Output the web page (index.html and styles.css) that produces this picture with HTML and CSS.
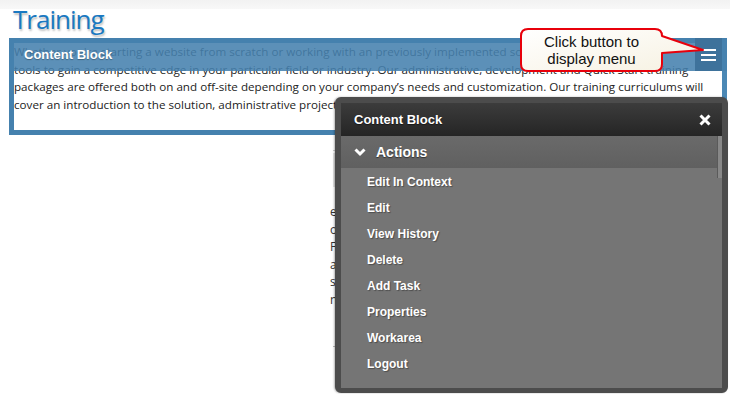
FILE: index.html
```html
<!DOCTYPE html>
<html lang="en">
<head>
    <meta charset="UTF-8">
    <title>Training</title>
    <link rel="stylesheet" href="styles.css">
</head>
<body>
    <div class="topstrip"></div>
    <h1 class="title">Training</h1>

    <div class="block">
        <div class="block-text">
            <span class="line">Whether you're starting a website from scratch or working with an previously implemented solution, we offer the</span>
            <span class="line">tools to gain a competitive edge in your particular field or industry. Our administrative, development and Quick Start training</span>
            <span class="line">packages are offered both on and off-site depending on your company’s needs and customization. Our training curriculums will</span>
            <span class="line">cover an introduction to the solution, administrative project management, developer training and guidelines to site and content</span>
        </div>
        <div class="block-bar">
            <span class="block-name">Content Block</span>
            <button class="menu-btn" aria-label="Menu">
                <span></span><span></span><span></span>
            </button>
        </div>
    </div>

    <!-- second block, mostly hidden under the menu -->
    <div class="behind">
        <div class="behind-head"></div>
        <div class="behind-text">
            <span>epartment</span>
            <span>orkflow</span>
            <span>Features</span>
            <span>admin</span>
            <span>site</span>
            <span>nal</span>
        </div>
    </div>

    <!-- callout -->
    <div class="callout">
        <svg class="callout-shape" width="190" height="46" viewBox="0 0 190 46">
            <defs>
                <linearGradient id="cfill" x1="0" y1="0" x2="1" y2="1">
                    <stop offset="0" stop-color="#ffffff"/>
                    <stop offset="1" stop-color="#f6f1e1"/>
                </linearGradient>
            </defs>
            <path d="M9 1 H136 Q143 1 143 8 L184 22 L143 25 V36 Q143 43 136 43 H9 Q2 43 2 36 V8 Q2 1 9 1 Z"
                  fill="url(#cfill)" stroke="#e8000b" stroke-width="2" stroke-linejoin="round"/>
        </svg>
        <div class="callout-text">Click button to<br>display menu</div>
    </div>

    <!-- context menu -->
    <div class="menu">
        <div class="menu-head">
            <span>Content Block</span>
            <svg class="menu-close" width="12" height="12" viewBox="0 0 12 12">
                <path d="M1.5 1.5 L10.5 10.5 M10.5 1.5 L1.5 10.5" stroke="#fff" stroke-width="3"/>
            </svg>
        </div>
        <div class="menu-group">
            <svg class="chev" width="12" height="9" viewBox="0 0 12 9">
                <path d="M1.5 1.5 L6 6 L10.5 1.5" fill="none" stroke="#fff" stroke-width="3"/>
            </svg>
            <span>Actions</span>
        </div>
        <div class="menu-scroll"></div>
        <ul class="menu-items">
            <li>Edit In Context</li>
            <li>Edit</li>
            <li>View History</li>
            <li>Delete</li>
            <li>Add Task</li>
            <li>Properties</li>
            <li>Workarea</li>
            <li>Logout</li>
        </ul>
    </div>
</body>
</html>
```

FILE: styles.css
```css
body {
    margin: 0;
    background-color: #fff;
    font-family: "Open Sans", sans-serif;
    width: 730px;
    height: 394px;
    overflow: hidden;
    position: relative;
}
.topstrip {
    height: 9px;
    background: linear-gradient(#f2f2f2, #f8f8f8);
}
.title {
    margin: 0;
    padding-left: 13px;
    height: 29px;
    font-family: "Open Sans", sans-serif;
    font-weight: 400;
    font-size: 26px;
    line-height: 21px;
    color: #1a79c1;
    text-shadow: 1px 2px 2px rgba(0, 0, 0, 0.25);
    letter-spacing: -1px;
}
.block {
    position: relative;
    margin-left: 9px;
    width: 708px;
    border: 5px solid #4581ae;
    border-right-color: #4b88b5;
    background-color: #fff;
}
.block-text {
    height: 87px;
    color: #222;
    font-size: 11.65px;
    line-height: 17.5px;
}
.line {
    display: block;
    white-space: nowrap;
    overflow: hidden;
}
.block-bar {
    position: absolute;
    top: -5px;
    left: -5px;
    right: -5px;
    height: 33px;
    background-color: rgba(69, 129, 174, 0.88);
    display: flex;
    align-items: center;
}
.block-name {
    padding-left: 15px;
    font-family: "Liberation Sans", Arial, sans-serif;
    font-weight: bold;
    font-size: 13px;
    color: #fff;
    text-shadow: 0 1px 1px rgba(0, 0, 0, 0.3);
}
.menu-btn {
    margin-left: auto;
    margin-right: 5px;
    width: 27px;
    height: 33px;
    border: none;
    padding: 0 6px;
    background-color: #3e729b;
    display: flex;
    flex-direction: column;
    justify-content: center;
    gap: 3px;
}
.menu-btn span {
    display: block;
    height: 2px;
    background-color: #fff;
}
.behind {
    position: absolute;
    left: 333px;
    top: 150px;
    width: 390px;
    height: 195px;
    border-top: 1px solid #ccc;
    border-bottom: 1px solid #bbb;
}
.behind-head {
    margin-top: 2px;
    height: 34px;
    background-color: #e4e4e4;
}
.behind-text {
    padding-top: 16px;
    font-size: 12px;
    line-height: 17.5px;
    color: #333;
}
.behind-text span {
    display: block;
    margin-left: -3px;
}
.callout {
    position: absolute;
    left: 519px;
    top: 28px;
    width: 190px;
    height: 46px;
}
.callout-shape {
    position: absolute;
    left: 0;
    top: 0;
}
.callout-text {
    position: relative;
    width: 145px;
    padding-top: 5px;
    text-align: center;
    font-family: "Liberation Sans", Arial, sans-serif;
    font-size: 15px;
    line-height: 17px;
    color: #111;
}
.menu {
    position: absolute;
    left: 335px;
    top: 97px;
    width: 381px;
    height: 285px;
    border: 6px solid #4c4c4c;
    border-bottom-width: 5px;
    border-radius: 6px;
    background-color: #757575;
    font-family: "Liberation Sans", Arial, sans-serif;
    font-weight: bold;
    color: #fff;
    box-shadow: -1px 0 2px rgba(0, 0, 0, 0.3);
}
.menu-head {
    height: 33px;
    padding: 0 11px 0 13px;
    display: flex;
    align-items: center;
    justify-content: space-between;
    background: linear-gradient(#3c3c3c, #252525);
    font-size: 13px;
    text-shadow: 0 1px 1px rgba(0, 0, 0, 0.5);
}
.menu-group {
    height: 32px;
    padding-left: 13px;
    margin-right: 4px;
    display: flex;
    align-items: center;
    gap: 10px;
    background: linear-gradient(#6a6a6a, #606060);
    font-size: 14px;
    text-shadow: 0 1px 1px rgba(0, 0, 0, 0.5);
}
.menu-scroll {
    position: absolute;
    right: 0;
    top: 33px;
    width: 4px;
    height: 42px;
    background-color: #888;
    border-left: 1px solid #5a5a5a;
}
.menu-items {
    list-style: none;
    margin: 0;
    padding: 1px 0 0 26px;
    font-size: 12px;
    text-shadow: 1px 1px 1px rgba(0, 0, 0, 0.35);
}
.menu-items li {
    height: 26px;
    line-height: 26px;
}
```
